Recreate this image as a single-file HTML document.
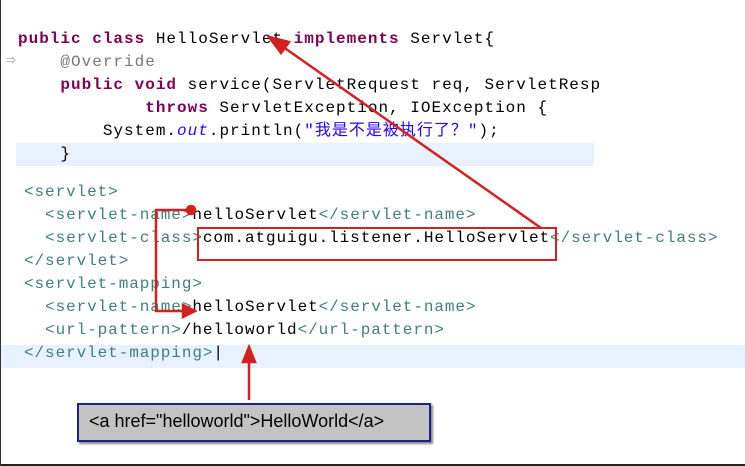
<!DOCTYPE html>
<html><head><meta charset="utf-8"><style>
body{margin:0;width:745px;height:466px;background:#fff;position:relative;overflow:hidden;border-left:1px solid #333;box-sizing:border-box}
.c{position:absolute;font-family:"Liberation Mono","Noto Sans CJK SC",monospace;font-size:16px;letter-spacing:1px;white-space:pre;line-height:23px}
.k{color:#7f0055;font-weight:bold}.g{color:#777}.s{color:#2a00ff}.t{color:#3f7f7f}
</style></head><body>
<div style="position:absolute;left:15px;top:143px;width:578px;height:23px;background:#e8f2fe"></div>
<div style="position:absolute;left:0;top:345px;width:745px;height:23px;background:#e8f2fe"></div>
<div style="position:absolute;left:0;bottom:0;width:745px;height:2px;background:#222"></div>
<div class="c" style="left:17px;top:28px"><span class="k">public class</span> HelloServlet <span class="k">implements</span> Servlet{
    <span class="g">@Override</span>
    <span class="k">public void</span> service(ServletRequest req, ServletResp
            <span class="k">throws</span> ServletException, IOException {
        System.<i class="s">out</i>.println(<span class="s">"我是不是被执行了？"</span>);
    }</div>
<div class="c" style="left:5px;top:51px;font-size:10px;color:#999">⇒</div>
<div class="c" style="left:23px;top:181px;letter-spacing:0.92px"><span class="t">&lt;servlet&gt;</span>
  <span class="t">&lt;servlet-name&gt;</span>helloServlet<span class="t">&lt;/servlet-name&gt;</span>
  <span class="t">&lt;servlet-class&gt;</span>com.atguigu.listener.HelloServlet<span class="t">&lt;/servlet-class&gt;</span>
<span class="t">&lt;/servlet&gt;</span>
<span class="t">&lt;servlet-mapping&gt;</span>
  <span class="t">&lt;servlet-name&gt;</span>helloServlet<span class="t">&lt;/servlet-name&gt;</span>
  <span class="t">&lt;url-pattern&gt;</span>/helloworld<span class="t">&lt;/url-pattern&gt;</span>
<span class="t">&lt;/servlet-mapping&gt;</span><span style="color:#000">|</span></div>
<div style="position:absolute;left:196px;top:227px;width:356px;height:30px;border:2px solid #d42020"></div>
<svg width="745" height="466" style="position:absolute;left:0;top:0">
<g stroke="#d42020" stroke-width="2.5" fill="#d42020">
<line x1="540" y1="228" x2="278" y2="44"/>
<polygon points="268,37 288,42 280,53"/>
<polyline points="190,210 155,210 155,311 186,311" fill="none"/>
<circle cx="190" cy="210" r="4"/>
<polygon points="194,311 182,305 182,317"/>
<line x1="248" y1="400" x2="248" y2="360"/>
<polygon points="248,347 242,362 254,362"/>
</g></svg>
<div style="position:absolute;left:76px;top:403px;width:350px;height:35px;background:#c3c3c3;border:2px solid #1f1f8f;box-shadow:2px 2px 2px #888"></div>
<div style="position:absolute;left:88px;top:410px;font-family:'Liberation Sans',sans-serif;font-size:18px;line-height:22px">&lt;a href="helloworld"&gt;HelloWorld&lt;/a&gt;</div>
</body></html>
